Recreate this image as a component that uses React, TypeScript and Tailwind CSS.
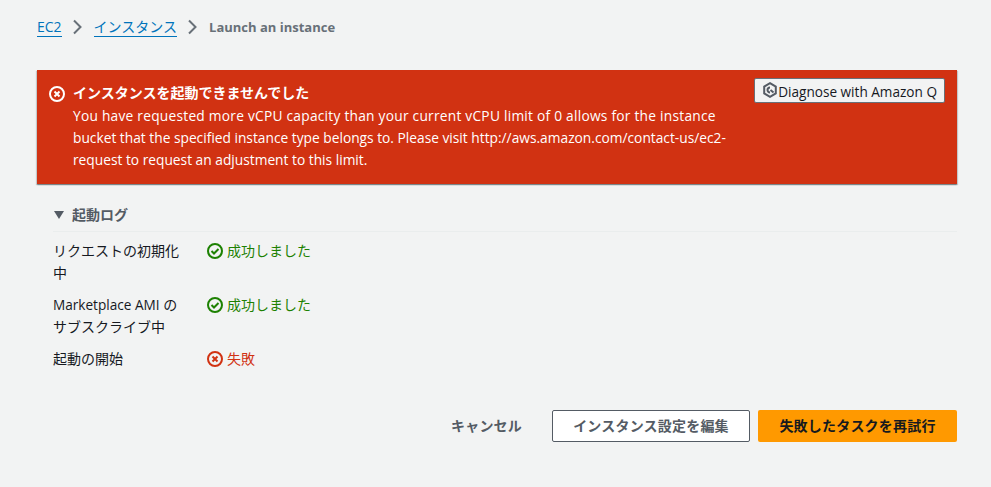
const font = "font-['Open_Sans','Noto_Sans_CJK_JP',sans-serif]"

function CircleX({ className }: { className?: string }) {
  return (
    <svg viewBox="0 0 16 16" fill="none" stroke="currentColor" strokeWidth="2" className={className}>
      <circle cx="8" cy="8" r="7" />
      <path d="M5.5 5.5l5 5M10.5 5.5l-5 5" />
    </svg>
  )
}

function CircleCheck({ className }: { className?: string }) {
  return (
    <svg viewBox="0 0 16 16" fill="none" stroke="currentColor" strokeWidth="2" className={className}>
      <circle cx="8" cy="8" r="7" />
      <path d="M4.5 8l2.5 2.5 4.5-4.5" />
    </svg>
  )
}

function Chevron() {
  return (
    <svg viewBox="0 0 16 16" fill="none" stroke="#687078" strokeWidth="2" className="h-4 w-4">
      <path d="M4 1.5L10.5 8 4 14.5" />
    </svg>
  )
}

function QIcon() {
  return (
    <svg viewBox="0 0 16 16" fill="none" stroke="#545b64" strokeWidth="2" className="absolute left-[7px] top-[3px] h-[16px] w-[16px]">
      <path d="M8 1.2l5.8 3.4v6.8L8 14.8l-5.8-3.4V4.6z" />
      <path d="M8 5.5a2.5 2.5 0 1 0 0 5M8.5 8l3 2.5" />
    </svg>
  )
}

const steps = [
  { label: <div>リクエストの初期化中</div>, ok: true },
  {
    label: (
      <>
        <div><span className="text-[13.6px]">Marketplace AMI</span> の</div>
        <div>サブスクライブ中</div>
      </>
    ),
    ok: true,
  },
  { label: <div>起動の開始</div>, ok: false },
]

export default function App() {
  return (
    <div className={`${font} min-h-[487px] bg-[#f2f3f3] px-[37px] pt-[16px] text-[14px] leading-[20px] text-[#16191f]`}>
      <nav className="flex h-[22px] items-center text-[14px]">
        <a className="border-b border-[#0073bb] leading-[19px] text-[#0073bb]">EC2</a>
        <span className="mx-[8px]"><Chevron /></span>
        <a className="border-b border-[#0073bb] leading-[19px] text-[#0073bb]">インスタンス</a>
        <span className="mx-[8px]"><Chevron /></span>
        <span className="text-[13px] font-bold text-[#687078]">Launch an instance</span>
      </nav>

      <div className="mt-[32px] flex h-[114px] w-[920px] bg-[#d13212] px-[12px] pt-[13px] text-white shadow-[0_1px_1px_0_rgba(0,28,36,0.3),1px_1px_1px_0_rgba(0,28,36,0.15),-1px_1px_1px_0_rgba(0,28,36,0.15)]">
        <CircleX className="mt-[3px] h-4 w-4 shrink-0" />
        <div className="ml-[8px] w-[665px]">
          <div className="font-bold">インスタンスを起動できませんでした</div>
          <p className="mt-[2px] text-[13.75px] leading-[22px]">
            <span className="tracking-[0.24px]">You have requested more vCPU capacity than your current vCPU limit of 0 allows for the instance</span>{' '}
            bucket that the specified instance type belongs to. Please visit http://aws.amazon.com/contact-us/ec2-request to request an adjustment to this limit.
          </p>
        </div>
        <button className="relative ml-auto mt-[-5px] flex h-[25px] w-[191px] items-center justify-end rounded-[2px] border border-[#687078] bg-[#f2f3f3] pr-[7px] pt-[2px] text-[13.6px] text-[#16191f]">
          <QIcon />
          Diagnose with Amazon Q
        </button>
      </div>

      <section className="ml-[16px] mt-[20px] w-[904px]">
        <div className="flex h-[28px] items-center border-b border-[#eaeded] pb-[6px] font-bold text-[#545b64]">
          <span className="ml-[1px] h-0 w-0 border-x-[5px] border-t-[8px] border-x-transparent border-t-[#545b64]" />
          <span className="ml-[8px]">起動ログ</span>
        </div>
        <div className="mt-[8px]">
          {steps.map((s, i) => (
            <div key={i} className="flex min-h-[54px] last:min-h-[32px]">
              <div className="w-[130px] leading-[22px]">{s.label}</div>
              <div className={`ml-[24px] flex h-[22px] items-center ${s.ok ? 'text-[#1d8102]' : 'text-[#d13212]'}`}>
                {s.ok ? <CircleCheck className="h-4 w-4" /> : <CircleX className="h-4 w-4" />}
                <span className="ml-[4px]">{s.ok ? '成功しました' : '失敗'}</span>
              </div>
            </div>
          ))}
        </div>
      </section>

      <div className="mt-[30px] flex w-[920px] items-center justify-end text-[14px] font-bold tracking-[0.2px]">
        <button className="mr-[30px] text-[#545b64]">キャンセル</button>
        <button className="h-[32px] w-[198px] rounded-[2px] border border-[#545b64] bg-white text-[#545b64]">インスタンス設定を編集</button>
        <button className="ml-[8px] h-[32px] w-[199px] rounded-[2px] bg-[#ff9900] text-[#16191f]">失敗したタスクを再試行</button>
      </div>
    </div>
  )
}
